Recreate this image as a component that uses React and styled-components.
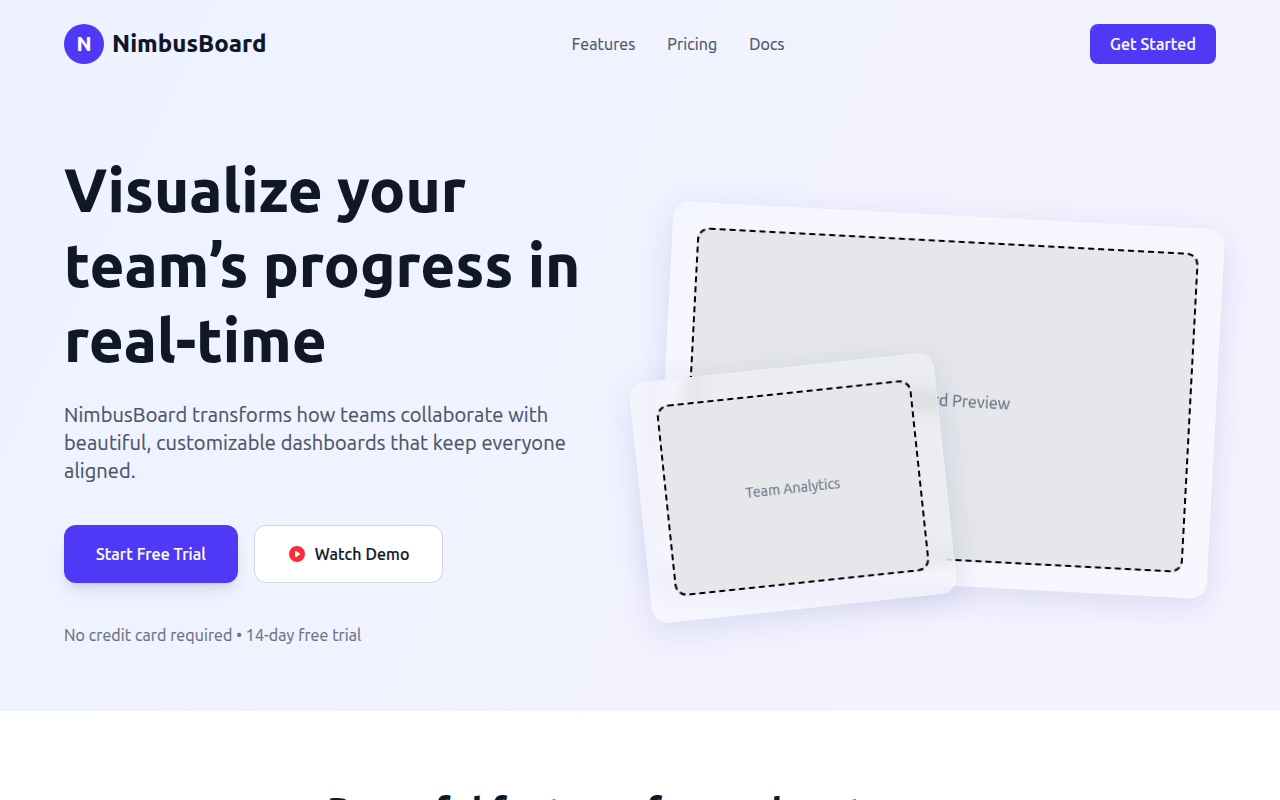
import React from "react";
import styled, { createGlobalStyle } from "styled-components";

const weight = { regular: 400, medium: 500, bold: 800 };

const GlobalStyle = createGlobalStyle`
  *, *::before, *::after { box-sizing: border-box; }
  html, body { height: 100%; }
  body {
    margin: 0;
    overflow: hidden;
    background: #fff;
    color: #101828;
    font: ${weight.regular} 16px/24px Ubuntu, "Noto Sans", sans-serif;
    letter-spacing: 0.1px;
    -webkit-text-stroke: 0.2px;
  }
  h1, h2, p { margin: 0; }
  button, a {
    font: inherit;
    color: inherit;
    letter-spacing: inherit;
    text-decoration: none;
  }
`;

const Page = styled.div`
  height: 100vh;
  overflow: hidden;
`;

const Hero = styled.div`
  background: linear-gradient(115deg, #eef2ff 0%, #f5f3ff 100%);
`;

const Header = styled.header`
  display: flex;
  align-items: center;
  justify-content: space-between;
  padding: 24px 64px;
`;

const Brand = styled.div`
  display: flex;
  align-items: center;
  gap: 8px;
  font-weight: ${weight.bold};
  letter-spacing: 0;
  -webkit-text-stroke: 0;
`;

const Logo = styled.span`
  display: flex;
  align-items: center;
  justify-content: center;
  width: 40px;
  height: 40px;
  border-radius: 50%;
  background: #4f39f6;
  color: #fff;
  font-size: 20px;
`;

const BrandName = styled.span`
  font-size: 24px;
  line-height: 32px;
`;

const Nav = styled.nav`
  display: flex;
  gap: 32px;
  color: #4a5565;
`;

const HeaderButton = styled.button`
  height: 40px;
  padding: 8px 20px;
  border: 0;
  border-radius: 8px;
  background: #4f39f6;
  color: #fff;
  font-weight: ${weight.medium};
`;

const HeroGrid = styled.section`
  display: grid;
  grid-template-columns: 1fr 1fr;
  gap: 48px;
  align-items: center;
  padding: 64px;
`;

const Title = styled.h1`
  font-size: 60px;
  line-height: 75px;
  font-weight: ${weight.bold};
  letter-spacing: -0.03px;
  -webkit-text-stroke: 0;

  &::first-letter {
    letter-spacing: 0.2px;
  }
`;

const Lead = styled.p`
  margin-top: 24px;
  color: #4a5565;
  font-size: 20px;
  line-height: 28px;
  letter-spacing: 0.11px;
`;

const Actions = styled.div`
  display: flex;
  gap: 16px;
  margin-top: 40px;
`;

const ActionButton = styled.button`
  display: flex;
  align-items: center;
  gap: 8px;
  height: 58px;
  padding: 0 32px;
  border: ${(p) => (p.$primary ? "0" : "1px solid #d1d5dc")};
  border-radius: 12px;
  background: ${(p) => (p.$primary ? "#4f39f6" : "#fff")};
  color: ${(p) => (p.$primary ? "#fff" : "#101828")};
  font-weight: ${weight.medium};
  box-shadow: ${(p) =>
    p.$primary
      ? "0 10px 15px -3px rgba(0,0,0,.1), 0 4px 6px -4px rgba(0,0,0,.1)"
      : "none"};
`;

const Note = styled.p`
  margin-top: 40px;
  color: #6a7282;
`;

const Showcase = styled.div`
  position: relative;
`;

const GlassCard = styled.div`
  padding: 24px;
  border: 1px solid rgba(255, 255, 255, 0.18);
  border-radius: 16px;
  background: rgba(255, 255, 255, 0.25);
  backdrop-filter: blur(10px);
  box-shadow: 0 8px 32px 0 rgba(31, 38, 135, 0.12);
  transform: rotate(3deg);
`;

const FloatingCard = styled(GlassCard)`
  position: absolute;
  left: -24px;
  bottom: -24px;
  transform: rotate(-6deg);
`;

const Placeholder = styled.div`
  display: flex;
  align-items: center;
  justify-content: center;
  width: ${(p) => (p.$small ? "256px" : "100%")};
  height: ${(p) => (p.$small ? "192px" : "320px")};
  border: 2px dashed #000;
  border-radius: 12px;
  background: #e5e7eb;
  color: #6a7282;
  font-size: ${(p) => (p.$small ? "14px" : "16px")};
`;

const Features = styled.section`
  padding: 80px 64px;
  text-align: center;
`;

const SectionTitle = styled.h2`
  font-size: 36px;
  line-height: 40px;
  font-weight: ${weight.bold};
  letter-spacing: 0;
  -webkit-text-stroke: 0;
  white-space: nowrap;
`;

const PlayIcon = () => (
  <svg width="20" height="20" viewBox="0 0 20 20" fill="#fb2c36">
    <path
      fillRule="evenodd"
      clipRule="evenodd"
      d="M10 18a8 8 0 100-16 8 8 0 000 16zM9.555 7.168A1 1 0 008 8v4a1 1 0 001.555.832l3-2a1 1 0 000-1.664l-3-2z"
    />
  </svg>
);

export default function App() {
  return (
    <Page>
      <GlobalStyle />
      <Hero>
        <Header>
          <Brand>
            <Logo>N</Logo>
            <BrandName>NimbusBoard</BrandName>
          </Brand>
          <Nav>
            <a>Features</a>
            <a>Pricing</a>
            <a>Docs</a>
          </Nav>
          <HeaderButton>Get Started</HeaderButton>
        </Header>
        <HeroGrid>
          <div>
            <Title>Visualize your team’s progress in real-time</Title>
            <Lead>
              NimbusBoard transforms how teams collaborate with beautiful,
              customizable dashboards that keep everyone aligned.
            </Lead>
            <Actions>
              <ActionButton $primary>Start Free Trial</ActionButton>
              <ActionButton>
                <PlayIcon />
                Watch Demo
              </ActionButton>
            </Actions>
            <Note>No credit card required • 14-day free trial</Note>
          </div>
          <Showcase>
            <GlassCard>
              <Placeholder>Dashboard Preview</Placeholder>
            </GlassCard>
            <FloatingCard>
              <Placeholder $small>Team Analytics</Placeholder>
            </FloatingCard>
          </Showcase>
        </HeroGrid>
      </Hero>
      <Features>
        <SectionTitle>Powerful features for modern teams</SectionTitle>
      </Features>
    </Page>
  );
}
